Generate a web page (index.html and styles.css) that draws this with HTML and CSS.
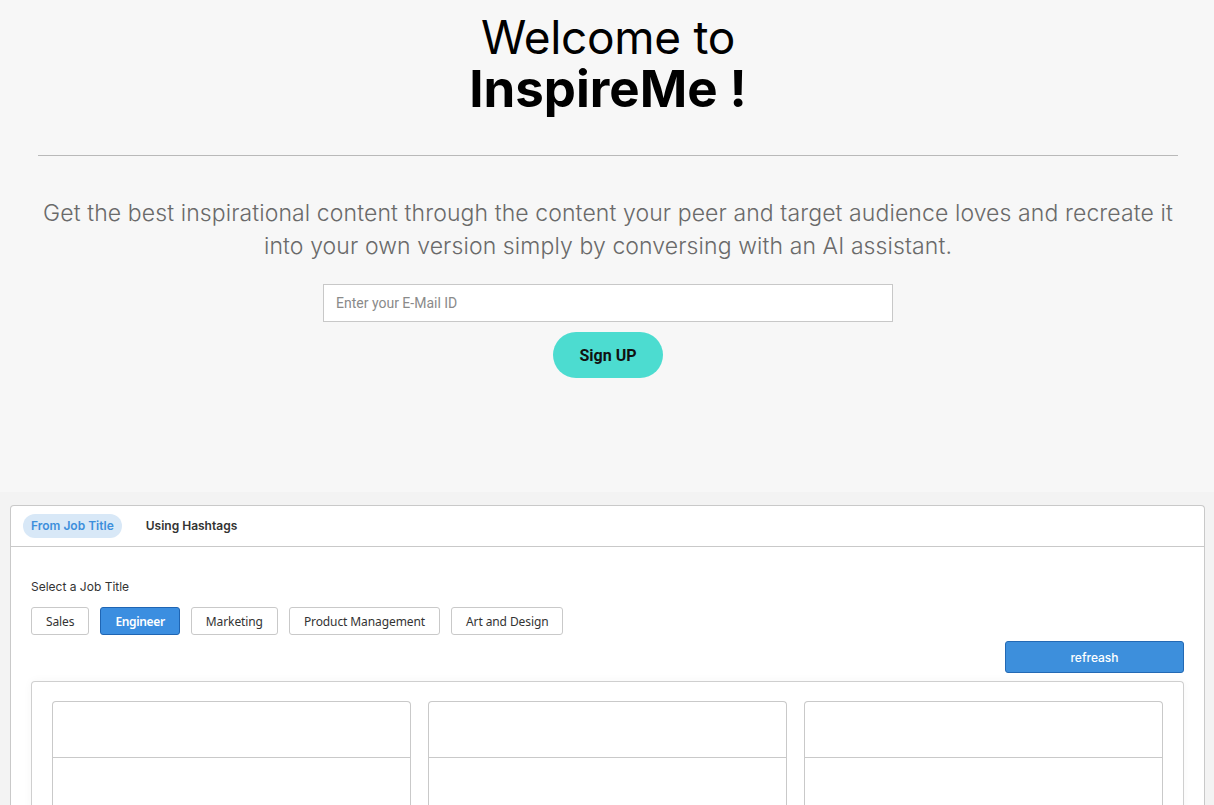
FILE: index.html
```html
<!DOCTYPE html>
<html lang="en">
<head>
<meta charset="utf-8">
<title>InspireMe</title>
<link rel="stylesheet" href="styles.css">
</head>
<body>
<section class="hero">
  <h1 class="title"><span class="title-light">Welcome to</span><span class="title-bold">InspireMe !</span></h1>
  <hr class="divider">
  <p class="lead">Get the best inspirational content through the content your peer and target audience loves and recreate it into your own version simply by conversing with an AI assistant.</p>
  <form class="signup">
    <input class="email" type="text" placeholder="Enter your E-Mail ID">
    <button class="signup-btn" type="button">Sign UP</button>
  </form>
</section>
<section class="panel">
  <div class="tabs">
    <span class="tab tab-active">From Job Title</span>
    <span class="tab">Using Hashtags</span>
  </div>
  <div class="panel-body">
    <div class="label">Select a Job Title</div>
    <div class="chips">
      <button class="chip" type="button">Sales</button>
      <button class="chip chip-active" type="button">Engineer</button>
      <button class="chip" type="button">Marketing</button>
      <button class="chip" type="button">Product Management</button>
      <button class="chip" type="button">Art and Design</button>
    </div>
    <div class="actions">
      <button class="refresh" type="button">refreash</button>
    </div>
    <div class="results">
      <div class="card"><div class="card-head"></div><div class="card-body"></div></div>
      <div class="card"><div class="card-head"></div><div class="card-body"></div></div>
      <div class="card"><div class="card-head"></div><div class="card-body"></div></div>
    </div>
  </div>
</section>
</body>
</html>
```
FILE: styles.css
```css
* { box-sizing: border-box; }
html, body { margin: 0; padding: 0; }
body {
  background: #f3f3f3;
  font-family: Inter, "Noto Sans", sans-serif;
  color: #222;
}
.hero {
  background: #f7f7f7;
  height: 492px;
  padding: 12px 36px 0 38px;
  text-align: center;
}
.title {
  margin: 0;
  color: #000;
}
.title-light, .title-bold { display: block; }
.title-light {
  font-size: 46px;
  line-height: 50px;
  font-weight: 400;
  letter-spacing: -0.3px;
}
.title-bold {
  font-size: 51px;
  line-height: 54px;
  font-weight: 700;
}
.divider {
  margin: 39px 0 0 0;
  border: 0;
  border-top: 1px solid #b9b9b9;
  height: 0;
}
.lead {
  margin: 41px 0 0 0;
  font-size: 23px;
  line-height: 33px;
  font-weight: 300;
  letter-spacing: 0.1px;
  color: #6a6a6a;
}
.signup {
  margin-top: 21px;
  display: flex;
  flex-direction: column;
  align-items: center;
  gap: 10px;
}
.email {
  width: 570px;
  height: 38px;
  border: 1px solid #c8c8c8;
  background: #fff;
  padding: 0 12px;
  font-family: Roboto, sans-serif;
  font-size: 14px;
  color: #333;
  outline: none;
}
.email::placeholder { color: #8a8a8a; }
.signup-btn {
  width: 110px;
  height: 46px;
  border: 0;
  border-radius: 23px;
  background: #4cdcd0;
  font-family: Roboto, sans-serif;
  font-weight: 700;
  font-size: 16px;
  color: #111;
}
.panel {
  margin: 13px 9px 0 10px;
  background: #fff;
  border: 1px solid #c9c9c9;
  border-bottom: 0;
  border-radius: 4px 4px 0 0;
  height: 300px;
}
.tabs {
  height: 41px;
  border-bottom: 1px solid #c9c9c9;
  display: flex;
  align-items: flex-start;
  gap: 16px;
  padding: 8px 12px 0 12px;
}
.tab {
  height: 24px;
  line-height: 24px;
  padding: 0 8px;
  border-radius: 12px;
  font-size: 12px;
  font-weight: 600;
  color: #333;
}
.tab-active {
  background: #d8e8f7;
  color: #3d8fdc;
}
.panel-body {
  padding: 32px 20px 0 20px;
}
.label {
  font-size: 12px;
  line-height: 16px;
  color: #333;
}
.chips {
  margin-top: 12px;
  display: flex;
  gap: 11px;
}
.chip {
  height: 28px;
  padding: 0 14px;
  background: #fff;
  border: 1px solid #c9c9c9;
  border-radius: 3px;
  font-family: "Noto Sans", sans-serif;
  font-size: 12px;
  letter-spacing: -0.1px;
  color: #333;
}
.chip-active {
  background: #3b8ee0;
  border-color: #1f65b3;
  color: #fff;
  font-weight: 600;
  letter-spacing: -0.35px;
}
.actions {
  margin-top: 6px;
  display: flex;
  justify-content: flex-end;
}
.refresh {
  width: 179px;
  height: 32px;
  background: #3d8fdc;
  border: 1px solid #2369b4;
  border-radius: 3px;
  font-family: Inter, sans-serif;
  font-weight: 500;
  font-size: 12px;
  color: #fff;
}
.results {
  margin-top: 8px;
  border: 1px solid #cfcfcf;
  border-bottom: 0;
  border-radius: 4px 4px 0 0;
  box-shadow: 0 0 10px rgba(0,0,0,0.04);
  padding: 19px 20px 0 20px;
  display: grid;
  grid-template-columns: repeat(3, 1fr);
  gap: 17px;
  height: 130px;
}
.card {
  border: 1px solid #c9c9c9;
  border-bottom: 0;
  border-radius: 4px 4px 0 0;
}
.card-head {
  height: 56px;
  border-bottom: 1px solid #c9c9c9;
}
```
